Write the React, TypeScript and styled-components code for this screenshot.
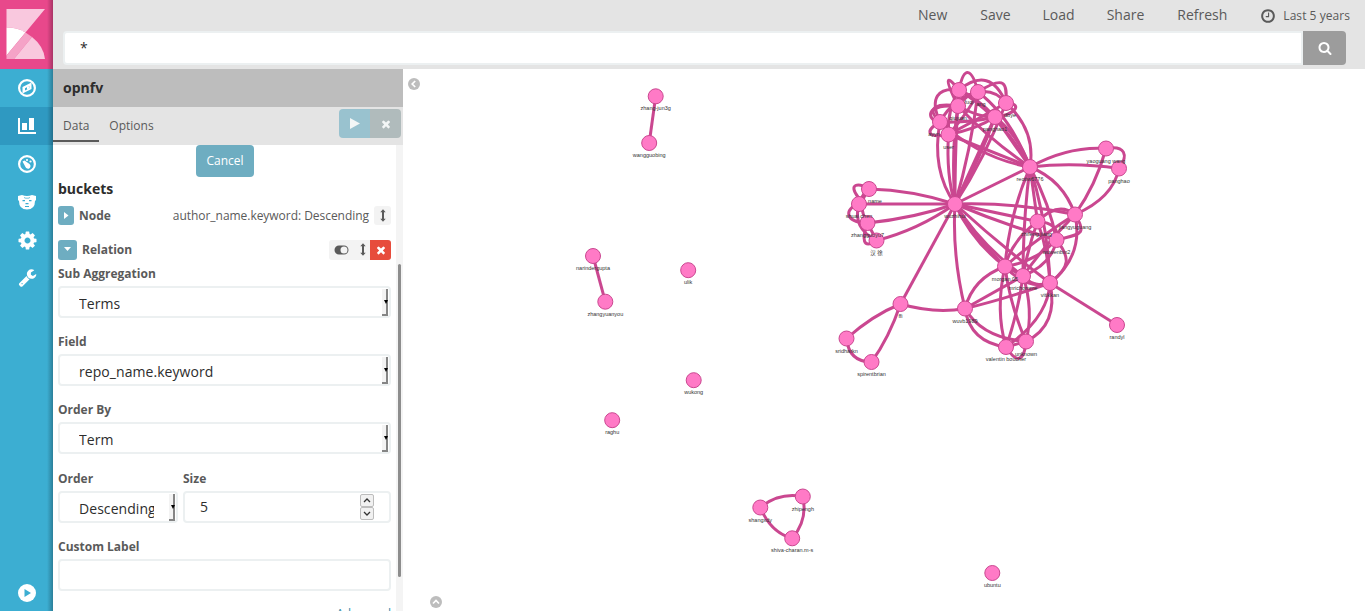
import React from 'react';
import styled, { createGlobalStyle } from 'styled-components';

const Global = createGlobalStyle`
  * { box-sizing: border-box; }
  body { margin: 0; overflow: hidden; background: #fff; font-family: "Open Sans", sans-serif; font-size: 13px; color: #5a5a5a; }
  svg { display: block; }
`;

const Page = styled.div`display: flex; width: 1365px; height: 611px; overflow: hidden;`;

const Sidebar = styled.nav`
  position: relative; display: flex; flex-direction: column; flex: none;
  width: 53px; height: 611px; background: #3caed2;
  &::after { content: ""; position: absolute; top: 0; right: 0; bottom: 0; width: 6px;
    background: linear-gradient(to right, rgba(0,0,0,0), rgba(0,0,0,.27)); }
`;
const Logo = styled.div`height: 69px; padding: 9px 0 0 6px; background: #e8488b;`;
const NavItem = styled.a<{ $active?: boolean; $drop?: number }>`
  display: flex; align-items: center; justify-content: center; height: 38px;
  padding: ${p => p.$drop || 0}px 0 ${p => (p.$drop ? 0 : 1)}px 1px;
  color: #fff; background: ${p => (p.$active ? '#2f99c1' : 'transparent')};
`;
const NavSpacer = styled.div`flex: 1;`;
const NavFoot = styled(NavItem)`height: 37px;`;

const Content = styled.div`display: flex; flex-direction: column; width: 1312px;`;
const Header = styled.header`height: 69px; background: #e4e4e4;`;
const TopMenu = styled.div`
  display: flex; justify-content: flex-end; align-items: center; height: 31px; padding: 0 15px 1px 0;
  font-size: 14px; line-height: 28px;
`;
const MenuItem = styled.a<{ $gap: number }>`margin-right: ${p => p.$gap}px;`;
const TimePicker = styled.a`display: flex; align-items: center; gap: 7px; font-size: 12px; letter-spacing: .05px; padding-top: 1px;`;
const SearchRow = styled.div`display: flex; height: 34px; padding: 0 19px 0 10px;`;
const QueryBox = styled.div`
  flex: 1; padding: 0 0 0 15px; background: #fff; border: 2px solid #ecf0f1; border-radius: 4px 0 0 4px;
  font-size: 14px; line-height: 29px; color: #2d2d2d;
`;
const SearchButton = styled.button`
  display: flex; align-items: center; justify-content: center; width: 43px; border: 0;
  border-radius: 0 4px 4px 0; background: #9c9c9c; color: #fff; padding: 0;
`;

const Body = styled.main`display: flex; height: 542px;`;
const Editor = styled.section`display: flex; flex-direction: column; flex: none; width: 350px; height: 542px; overflow: hidden;`;
const IndexTitle = styled.div`
  height: 38px; flex: none; padding-left: 10px; background: #bdbdbd; color: #2d2d2d; font-size: 14px; font-weight: 700; line-height: 37px;
`;
const TabBar = styled.div`display: flex; flex: none; height: 38px; padding-right: 2px; background: #e4e4e4;`;
const Tab = styled.a<{ $active?: boolean }>`
  height: 35px; padding: 0 10px; font-size: 12px; line-height: 37px;
  border-bottom: 2px solid ${p => (p.$active ? '#5a5a5a' : 'transparent')};
`;
const ApplyGroup = styled.div`display: flex; height: 29px; margin: 2px 0 0 auto; border-radius: 4px; overflow: hidden;`;
const ApplyButton = styled.button<{ $bg: string }>`
  display: flex; align-items: center; justify-content: center; width: 31px; border: 0; padding: 0;
  background: ${p => p.$bg}; color: #f3f6f6;
`;
const Scroller = styled.div`display: flex; height: 466px;`;
const Form = styled.div`width: 343px; padding: 0 5px; overflow: hidden;`;
const Track = styled.div`width: 7px; padding: 119px 2px 0 2px; background: #f4f4f4;`;
const Thumb = styled.div`height: 313px; width: 3px; border-radius: 2px; background: #8d8d8d;`;

const Cancel = styled.button`
  display: block; margin: 0 0 0 138px; width: 58px; height: 32px; padding: 0 0 2px; border: 0; border-radius: 4px;
  background: #6eadc1; color: #fff; font: 12px "Open Sans", sans-serif;
`;
const Section = styled.h2`margin: 3px 0 0; height: 26px; font-size: 14px; line-height: 18px; font-weight: 700; color: #2d2d2d;`;
const AggRow = styled.div<{ $h: number; $top?: number }>`display: flex; align-items: center; height: ${p => p.$h}px; padding-top: ${p => p.$top || 0}px;`;
const Toggle = styled.button<{ $w: number; $h: number }>`
  display: flex; align-items: center; justify-content: center; width: ${p => p.$w}px; height: ${p => p.$h}px;
  border: 0; padding: 0; border-radius: 3px; background: #6eadc1; color: #fff;
`;
const AggName = styled.span`margin-left: 5px; font-size: 12px; font-weight: 700; line-height: 18px;`;
const AggDescription = styled.span`margin-left: auto; margin-right: 5px; font-size: 12px; letter-spacing: -.04px; line-height: 18px;`;
const Handle = styled.div`display: flex; align-items: center; justify-content: center; width: 17px; height: 19px; background: #f3f3f3; border-radius: 3px;`;
const Controls = styled.div`display: flex; align-items: center; height: 20px; margin-left: auto; background: #f3f3f3; border-radius: 3px; overflow: hidden; padding-left: 5px;`;
const Remove = styled.button`
  display: flex; align-items: center; justify-content: center; width: 21px; height: 20px; margin-left: 4px;
  border: 0; padding: 0; background: #e74c3c; color: #fff;
`;
const ToggleSlot = styled.div`margin-right: 11px;`;
const Field = styled.div<{ $h?: number; $w?: number }>`
  display: flex; flex-direction: column; height: ${p => p.$h || 68}px; width: ${p => p.$w || 333}px;
`;
const Label = styled.label`height: 21px; font-size: 12px; line-height: 17px; font-weight: 700; flex: none;`;
const InputBox = styled.div`
  display: flex; justify-content: space-between; height: 32px; padding: 0 1px 0 19px;
  border: 2px solid #ecf0f1; border-radius: 4px; background: #fff; font-size: 14px; line-height: 31px; color: #2d2d2d;
`;
const Value = styled.span<{ $w?: number; $up?: boolean }>`
  display: block; overflow: hidden; white-space: nowrap; width: ${p => (p.$w ? p.$w + 'px' : 'auto')};
  line-height: ${p => (p.$up ? 27 : 31)}px; letter-spacing: .06px;
`;
const SelectArrow = styled.span`
  position: relative; width: 6px; height: 27px; margin-top: 1px; background: #f3f3f3;
  border-right: 2px solid #858585; border-bottom: 2px solid #858585;
  &::before { content: ""; position: absolute; left: 2px; top: 11px; border: 2px solid transparent; border-top: 4px solid #000; border-bottom: 0; }
`;
const SizeInput = styled(InputBox)`padding: 0 15px 0 15px;`;
const Spinner = styled.div`display: flex; flex-direction: column; margin-top: 1px;`;
const SpinButton = styled.div`
  display: flex; align-items: center; justify-content: center; width: 14px; height: 13px;
  border: 1px solid #bcbcbc; border-radius: 2px; background: #f1f1f1;
`;
const Pair = styled.div`display: flex; gap: 5px; margin-top: 1px;`;
const Advanced = styled.a`display: block; margin: -7px 0 0; text-align: right; color: #328caa; font-size: 12px; line-height: 17px;`;
const Canvas = styled.section`width: 962px; height: 542px; background: #fff;`;
const NodeLabel = styled.text`font: 5.500px "Liberation Sans", "Noto Sans CJK SC", sans-serif; fill: #333; text-anchor: middle;`;

const PATHS = {
  times: 'M1490 1322q0 40-28 68l-136 136q-28 28-68 28t-68-28l-294-294-294 294q-28 28-68 28t-68-28l-136-136q-28-28-28-68t28-68l294-294-294-294q-28-28-28-68t28-68l136-136q28-28 68-28t68 28l294 294 294-294q28-28 68-28t68 28l136 136q28 28 28 68t-28 68l-294 294 294 294q28 28 28 68z',
  search: 'M1216 832q0-185-131.500-316.500t-316.500-131.500-316.500 131.500-131.500 316.500 131.500 316.500 316.500 131.500 316.500-131.500 131.500-316.500zm512 832q0 52-38 90t-90 38q-54 0-90-38l-343-342q-179 124-399 124-143 0-273.500-55.500t-225-150-150-225-55.500-273.500 55.500-273.500 150-225 225-150 273.500-55.500 273.500 55.500 225 150 150 225 55.500 273.500q0 220-124 399l343 343q37 37 37 90z',
  cog: 'M1152 896q0-106-75-181t-181-75-181 75-75 181 75 181 181 75 181-75 75-181zm512-109v222q0 12-8 23t-20 13l-185 28q-19 54-39 91 35 50 107 138 10 12 10 25t-9 23q-27 37-99 108t-94 71q-12 0-26-9l-138-108q-44 23-91 38-16 136-29 186-7 28-36 28h-222q-14 0-24.500-8.500t-11.500-21.500l-28-184q-49-16-90-37l-141 107q-10 9-25 9-14 0-25-11-126-114-165-168-7-10-7-23 0-12 8-23 15-21 51-66.500t54-70.500q-27-50-41-99l-183-27q-13-2-21-12.500t-8-23.500v-222q0-12 8-23t19-13l186-28q14-46 39-92-40-57-107-138-10-12-10-24 0-10 9-23 26-36 98.500-107.500t94.500-71.500q13 0 26 10l138 107q44-23 91-38 16-136 29-186 7-28 36-28h222q14 0 24.500 8.500t11.500 21.500l28 184q49 16 90 37l142-107q9-9 24-9 13 0 25 10 129 119 165 170 7 8 7 22 0 12-8 23-15 21-51 66.500t-54 70.500q26 50 41 98l183 28q13 2 21 12.500t8 23.500z',
  clock: 'M1024 544v448q0 14-9 23t-23 9h-320q-14 0-23-9t-9-23v-64q0-14 9-23t23-9h224v-352q0-14 9-23t23-9h64q14 0 23 9t9 23zm416 352q0-148-73-273t-198-198-273-73-273 73-198 198-73 273 73 273 198 198 273 73 273-73 198-198 73-273zm224 0q0 209-103 385.500t-279.500 279.500-385.500 103-385.500-103-279.500-279.500-103-385.500 103-385.500 279.500-279.500 385.500-103 385.500 103 279.500 279.500 103 385.500z',
  wrench: 'M448 1472q0-26-19-45t-45-19-45 19-19 45 19 45 45 19 45-19 19-45zm644-420l-682 682q-37 37-90 37-52 0-91-37l-106-108q-38-36-38-90 0-53 38-91l681-681q39 98 114.500 173.500t173.500 114.500zm634-435q0 39-23 106-47 134-164.500 217.500t-258.500 83.500q-185 0-316.500-131.500t-131.500-316.500 131.500-316.500 316.500-131.500q58 0 121.500 16.500t107.500 46.500q16 11 16 28t-16 28l-293 169v224l193 107q5-3 79-48.500t135.500-81 70.500-35.500q15 0 23.500 10t8.500 25z',
};

const Glyph = ({ name, size }: { name: keyof typeof PATHS; size: number }) => (
  <svg width={size} height={size} viewBox="0 0 1792 1792"><path fill="currentColor" d={PATHS[name]} /></svg>
);

const KibanaMark = () => (
  <svg width="39" height="50" viewBox="0 0 39 50">
    <path d="M.5 0H39L19.500 23.500Q12 18.500.5 18.500Z" fill="#f9c8de" />
    <path d="M.5 18.500Q12 18.500 19.500 23.500L.5 46.500Z" fill="#fff" />
    <path d="M19.500 23.500L26 28L8 50H.5V46.500Z" fill="#f5a3c7" />
    <path d="M26 28Q37.500 37 39 50H8Z" fill="#f9c8de" />
  </svg>
);

const VerticalArrows = () => (
  <svg width="6" height="13" viewBox="0 0 6 13"><path fill="#5a5a5a" d="M3 .3L5.700 3.300H4V9.700H5.700L3 12.700L.3 9.700H2V3.300H.3Z" /></svg>
);
const CircleChevron = ({ x, y, up }: { x: number; y: number; up?: boolean }) => (
  <g>
    <circle cx={x} cy={y} r="6" fill="#bdbdbd" />
    <path d={up ? `M${x - 3} ${y + 1.500}l3-3 3 3` : `M${x + 1.200} ${y - 3}l-3 3 3 3`} fill="none" stroke="#fff" strokeWidth="1.700" />
  </g>
);

type GraphNode = [string, number, number, number?];
const nodes: Record<string, GraphNode> = {
  a: ['fuqi', 959, 90, 10], b: ['ang', 978, 92, 3], c: ['dbye', 1006, 103, 4], d: ['qiujuan', 958, 106],
  e: ['panghao1', 995, 117], f: ['ayyn', 940, 122, -6], g: ['user', 948.500, 134.500], r: ['reotiw6776', 1030, 167], w: ['wuzhihui', 955, 204],
  yg: ['yaoguang wang', 1106, 148.500], ph: ['panghao', 1119, 168.500], nm: ['name', 869, 189, 6], sc: ['shuai chen', 859, 204], zg: ['zhangguoyu7', 867.500, 223],
  hx: ['汉 徐', 876.500, 240.500], zf: ['zhifeng.jiang', 1037.500, 221.500, -1], jy: ['jiangyuguang', 1075, 214.500], wb: ['wuwenbin2', 1056.500, 240],
  mo: ['morgan.05', 1005, 266.500], mr: ['mrichomme', 1023, 276], vi: ['vitikkan', 1050, 283], wv: ['wuvb1989', 965, 308.500], ra: ['randyl', 1117, 325],
  un: ['unknown', 1026, 341.500], va: ['valentin boucher', 1006, 347], fi: ['ffi', 900.500, 304], sk: ['sridharkn', 846.500, 338.500], sb: ['spirentbrian', 871.500, 362],
  zj: ['zhang-jun3g', 655.700, 96.300], wg: ['wangguobing', 649.200, 143], ng: ['narindergupta', 593, 256], zy: ['zhangyuanyou', 605.300, 301.700],
  ul: ['ulik', 688.200, 270.200], wk: ['wukong', 693.700, 380.200], rg: ['raghu', 612.200, 420.200], sh: ['shangxdy', 760.300, 507.500], zh: ['zhipengh', 802.800, 496.500],
  sv: ['shiva-charan.m-s', 792.200, 538.300], ub: ['ubuntu', 992.300, 573],
};

// from, to and an optional bezier curve; without one the edge is straight
const edges: [string, string, string?][] = [
  ['zj', 'wg'], ['ng', 'zy'], ['sh', 'zh', 'Q779 492'], ['zh', 'sv', 'Q808 520'], ['sv', 'sh', 'Q771 533'],
  ['w', 'nm', 'Q912 190'], ['w', 'sc'], ['w', 'zg', 'Q915 218'], ['w', 'hx', 'Q918 230'],
  ['nm', 'sc', 'C858 182 848 184 858 197 L'], ['nm', 'zg', 'Q856 205'], ['sc', 'zg', 'C845 208 843 222'], ['sc', 'hx', 'Q852 228'],
  ['nm', 'sc', 'Q863 192'], ['zg', 'hx', 'C862 238 862 250'], ['zg', 'hx'],
  ['w', 'fi'], ['w', 'wv', 'Q952 255'], ['w', 'r'],
  ['w', 'mo', 'Q972 241'], ['w', 'mr', 'Q981 245'], ['w', 'vi', 'Q1001 246'], ['w', 'wb', 'Q1005 225'], ['w', 'zf'], ['w', 'jy', 'Q1015 202'],
  ['w', 'mo', 'Q976 238'], ['w', 'f', 'Q931 170'], ['w', 'g', 'Q946 175'], ['w', 'd', 'Q951 150'], ['w', 'a', 'Q955 140'], ['w', 'b', 'Q971 150'],
  ['w', 'e'], ['w', 'e', 'Q981 157'], ['w', 'c', 'Q985 158'],
  ['r', 'g'], ['r', 'f', 'Q981 159'], ['r', 'd', 'Q990 140'], ['r', 'a', 'Q1003 118'], ['r', 'b', 'Q1010 116'],
  ['r', 'e'], ['r', 'e', 'Q1018 135'], ['r', 'c', 'Q1036 130'],
  ['a', 'b', 'C964 65 972 68'], ['d', 'a', 'C942 74 948 76'], ['a', 'c', 'Q990 65'], ['b', 'c', 'C1006 74 1007 84'], ['b', 'c', 'Q995 89'],
  ['f', 'a', 'C929 98 938 87'], ['f', 'b', 'Q953 98'], ['f', 'g', 'C925 130 926 139'], ['f', 'd', 'C924 107 938 103'],
  ['d', 'f', 'C919 104 930 123'], ['d', 'b', 'Q967 94'], ['a', 'd'], ['d', 'e', 'Q980 118'], ['a', 'e', 'Q976 97'],
  ['g', 'e', 'Q977 129'], ['g', 'b', 'Q969 112'], ['g', 'c', 'Q980 118'], ['f', 'e', 'Q970 123'], ['e', 'c', 'C1018 114 1022 103'], ['a', 'g', 'Q947 110'],
  ['r', 'mo', 'Q1009 216'], ['r', 'mr', 'Q1023 220'], ['r', 'zf'], ['r', 'wb', 'Q1050 205'], ['r', 'vi', 'Q1048 225'], ['r', 'jy', 'Q1063 180'],
  ['r', 'yg', 'Q1068 146'], ['r', 'ph', 'Q1075 162'], ['yg', 'ph', 'C1125 145 1129 155'], ['yg', 'jy', 'Q1096 185'], ['ph', 'jy', 'Q1113 198'],
  ['zf', 'jy', 'Q1058 201'], ['zf', 'wb', 'Q1060 223'], ['jy', 'wb', 'C1088 235 1080 234'], ['jy', 'vi', 'Q1084 256'], ['wb', 'vi', 'C1070 257 1071 267'],
  ['jy', 'mo', 'Q1036 239'], ['wb', 'mo', 'Q1035 262'], ['zf', 'mo', 'Q1012 240'], ['zf', 'mr', 'Q1028 248'], ['jy', 'mr', 'Q1045 245'], ['wb', 'mr', 'Q1052 264'], ['zf', 'vi', 'Q1048 250'],
  ['mo', 'mr'], ['mr', 'vi', 'Q1035 289'], ['mo', 'vi', 'Q1026 290'], ['mo', 'wv', 'Q973 278'], ['mr', 'wv'], ['vi', 'wv', 'Q1002 300'],
  ['wv', 'va', 'Q970 342'], ['wv', 'un', 'Q982 338'], ['mo', 'va', 'Q995 310'], ['mo', 'un', 'Q1010 305'], ['mr', 'va', 'Q1018 313'], ['mr', 'un', 'Q1034 310'],
  ['vi', 'un', 'Q1059 325'], ['vi', 'va', 'Q1048 318'], ['va', 'un', 'C1016 363 1024 363'], ['va', 'un'], ['vi', 'ra'],
  ['fi', 'wv', 'Q935 314'], ['fi', 'sk', 'Q873 315'], ['fi', 'sb', 'Q889 338'], ['sk', 'sb', 'Q849 362'],
];

const Graph = () => (
  <svg width="962" height="542" viewBox="403 69 962 542">
    <g fill="none" stroke="#ca4790" strokeWidth="3">
      {edges.map(([from, to, curve], i) => (
        <path key={i} d={`M${nodes[from][1]} ${nodes[from][2]} ${curve || 'L'} ${nodes[to][1]} ${nodes[to][2]}`} />
      ))}
    </g>
    {Object.entries(nodes).map(([id, [, x, y]]) => (
      <circle key={id} cx={x} cy={y} r="7.500" fill="#ff7ac6" stroke="#ca4790" />
    ))}
    {Object.entries(nodes).map(([id, [name, x, y, shift]]) => (
      <NodeLabel key={id} x={x + (shift || 0)} y={y + 14}>{name}</NodeLabel>
    ))}
    <CircleChevron x={414} y={84} />
    <CircleChevron x={436} y={602} up />
  </svg>
);

const Select = ({ value, width }: { value: string; width?: number }) => (
  <InputBox><Value $w={width}>{value}</Value><SelectArrow /></InputBox>
);

export default function App() {
  return (
    <Page>
      <Global />
      <Sidebar>
        <Logo><KibanaMark /></Logo>
        <NavItem>
          <svg width="18" height="18" viewBox="0 0 18 18"><circle cx="9" cy="9" r="7.900" fill="none" stroke="#fff" strokeWidth="2.200" /><path fillRule="evenodd" d="M13.500 3.500V10L4.500 14.500V8ZM11.300 7L7 9.200V11.500L11.300 9.300Z" fill="#fff" /><path d="M9 7.800L11.200 7V9.600L9 10.600Z" fill="#fff" /></svg>
        </NavItem>
        <NavItem $active>
          <svg width="18" height="16" viewBox="0 0 18 16"><path d="M0 0H2V14H18V16H0ZM4 5H9V12H4ZM11 0H16V12H11Z" fill="#fff" /></svg>
        </NavItem>
        <NavItem>
          <svg width="18" height="18" viewBox="0 0 18 18"><circle cx="9" cy="9" r="7.900" fill="none" stroke="#fff" strokeWidth="2.200" /><path d="M4.500 6.500L6.500 5.500L11.500 9A2.600 2.600 0 1 1 7.500 12Z" fill="#fff" /><circle cx="9" cy="5" r="1.100" fill="#fff" /><circle cx="12.500" cy="6.500" r="1.100" fill="#fff" /></svg>
        </NavItem>
        <NavItem $drop={1}>
          <svg width="18" height="15" viewBox="0 0 18 15"><path d="M0 1L4 0Q9 2 14 0L18 1V5L17 6Q17 14.500 9 14.500T1 6L0 5Z" fill="#fff" /><path d="M4.500 5H7V6.300H4.500ZM11 5H13.500V6.300H11ZM7.500 8H10.500V9.300H7.500ZM7 11H11V12H7ZM6 2.200Q9 3.200 12 2.200V2.900Q9 3.900 6 2.900Z" fill="#3caed2" /></svg>
        </NavItem>
        <NavItem $drop={1}><Glyph name="cog" size={21} /></NavItem>
        <NavItem><Glyph name="wrench" size={19} /></NavItem>
        <NavSpacer />
        <NavFoot $drop={1}>
          <svg width="18" height="18" viewBox="0 0 18 18"><circle cx="9" cy="9" r="9" fill="#fff" /><path d="M6.500 5L13 9L6.500 13Z" fill="#3caed2" /></svg>
        </NavFoot>
      </Sidebar>
      <Content>
        <Header>
          <TopMenu>
            <MenuItem $gap={33}>New</MenuItem>
            <MenuItem $gap={32}>Save</MenuItem>
            <MenuItem $gap={32}>Load</MenuItem>
            <MenuItem $gap={33}>Share</MenuItem>
            <MenuItem $gap={33}>Refresh</MenuItem>
            <TimePicker><Glyph name="clock" size={16} />Last 5 years</TimePicker>
          </TopMenu>
          <SearchRow>
            <QueryBox>*</QueryBox>
            <SearchButton><Glyph name="search" size={14} /></SearchButton>
          </SearchRow>
        </Header>
        <Body>
          <Editor>
            <IndexTitle>opnfv</IndexTitle>
            <TabBar>
              <Tab $active>Data</Tab>
              <Tab>Options</Tab>
              <ApplyGroup>
                <ApplyButton $bg="#99c2cf"><svg width="10" height="11" viewBox="0 0 10 11"><path d="M0 0L10 5.500L0 11Z" fill="currentColor" /></svg></ApplyButton>
                <ApplyButton $bg="#b0bbbc"><Glyph name="times" size={12} /></ApplyButton>
              </ApplyGroup>
            </TabBar>
            <Scroller>
              <Form>
                <Cancel>Cancel</Cancel>
                <Section>buckets</Section>
                <AggRow $h={19}>
                  <Toggle $w={16} $h={19}><svg width="5" height="7" viewBox="0 0 5 7"><path d="M0 0L4.500 3.500L0 7Z" fill="#fff" /></svg></Toggle>
                  <AggName>Node</AggName>
                  <AggDescription>author_name.keyword: Descending</AggDescription>
                  <Handle><VerticalArrows /></Handle>
                </AggRow>
                <AggRow $h={40} $top={9}>
                  <Toggle $w={19} $h={20}><svg width="7" height="5" viewBox="0 0 7 5"><path d="M0 0H7L3.500 4Z" fill="#fff" /></svg></Toggle>
                  <AggName>Relation</AggName>
                  <Controls>
                    <ToggleSlot><svg width="15" height="10" viewBox="0 0 15 10"><path fillRule="evenodd" d="M5 .5H10A4.500 4.500 0 0 1 10 9.500H5A4.500 4.500 0 0 1 5 .5ZM10 1.500A3.500 3.500 0 1 0 10 8.500A3.500 3.500 0 1 0 10 1.500Z" fill="#5a5a5a" /></svg></ToggleSlot>
                    <VerticalArrows />
                    <Remove><Glyph name="times" size={12} /></Remove>
                  </Controls>
                </AggRow>
                <Field><Label>Sub Aggregation</Label><Select value="Terms" /></Field>
                <Field><Label>Field</Label><Select value="repo_name.keyword" /></Field>
                <Field><Label>Order By</Label><Select value="Term" /></Field>
                <Pair>
                  <Field $w={120}><Label>Order</Label><Select value="Descending" width={75} /></Field>
                  <Field $w={208}>
                    <Label>Size</Label>
                    <SizeInput>
                      <Value $up>5</Value>
                      <Spinner>
                        <SpinButton><svg width="8" height="5" viewBox="0 0 8 5"><path d="M1 4L4 1L7 4" fill="none" stroke="#333" strokeWidth="1.300" /></svg></SpinButton>
                        <SpinButton><svg width="8" height="5" viewBox="0 0 8 5"><path d="M1 1L4 4L7 1" fill="none" stroke="#333" strokeWidth="1.300" /></svg></SpinButton>
                      </Spinner>
                    </SizeInput>
                  </Field>
                </Pair>
                <Field $h={74}><Label>Custom Label</Label><InputBox /></Field>
                <Advanced>Advanced</Advanced>
              </Form>
              <Track><Thumb /></Track>
            </Scroller>
          </Editor>
          <Canvas><Graph /></Canvas>
        </Body>
      </Content>
    </Page>
  );
}
